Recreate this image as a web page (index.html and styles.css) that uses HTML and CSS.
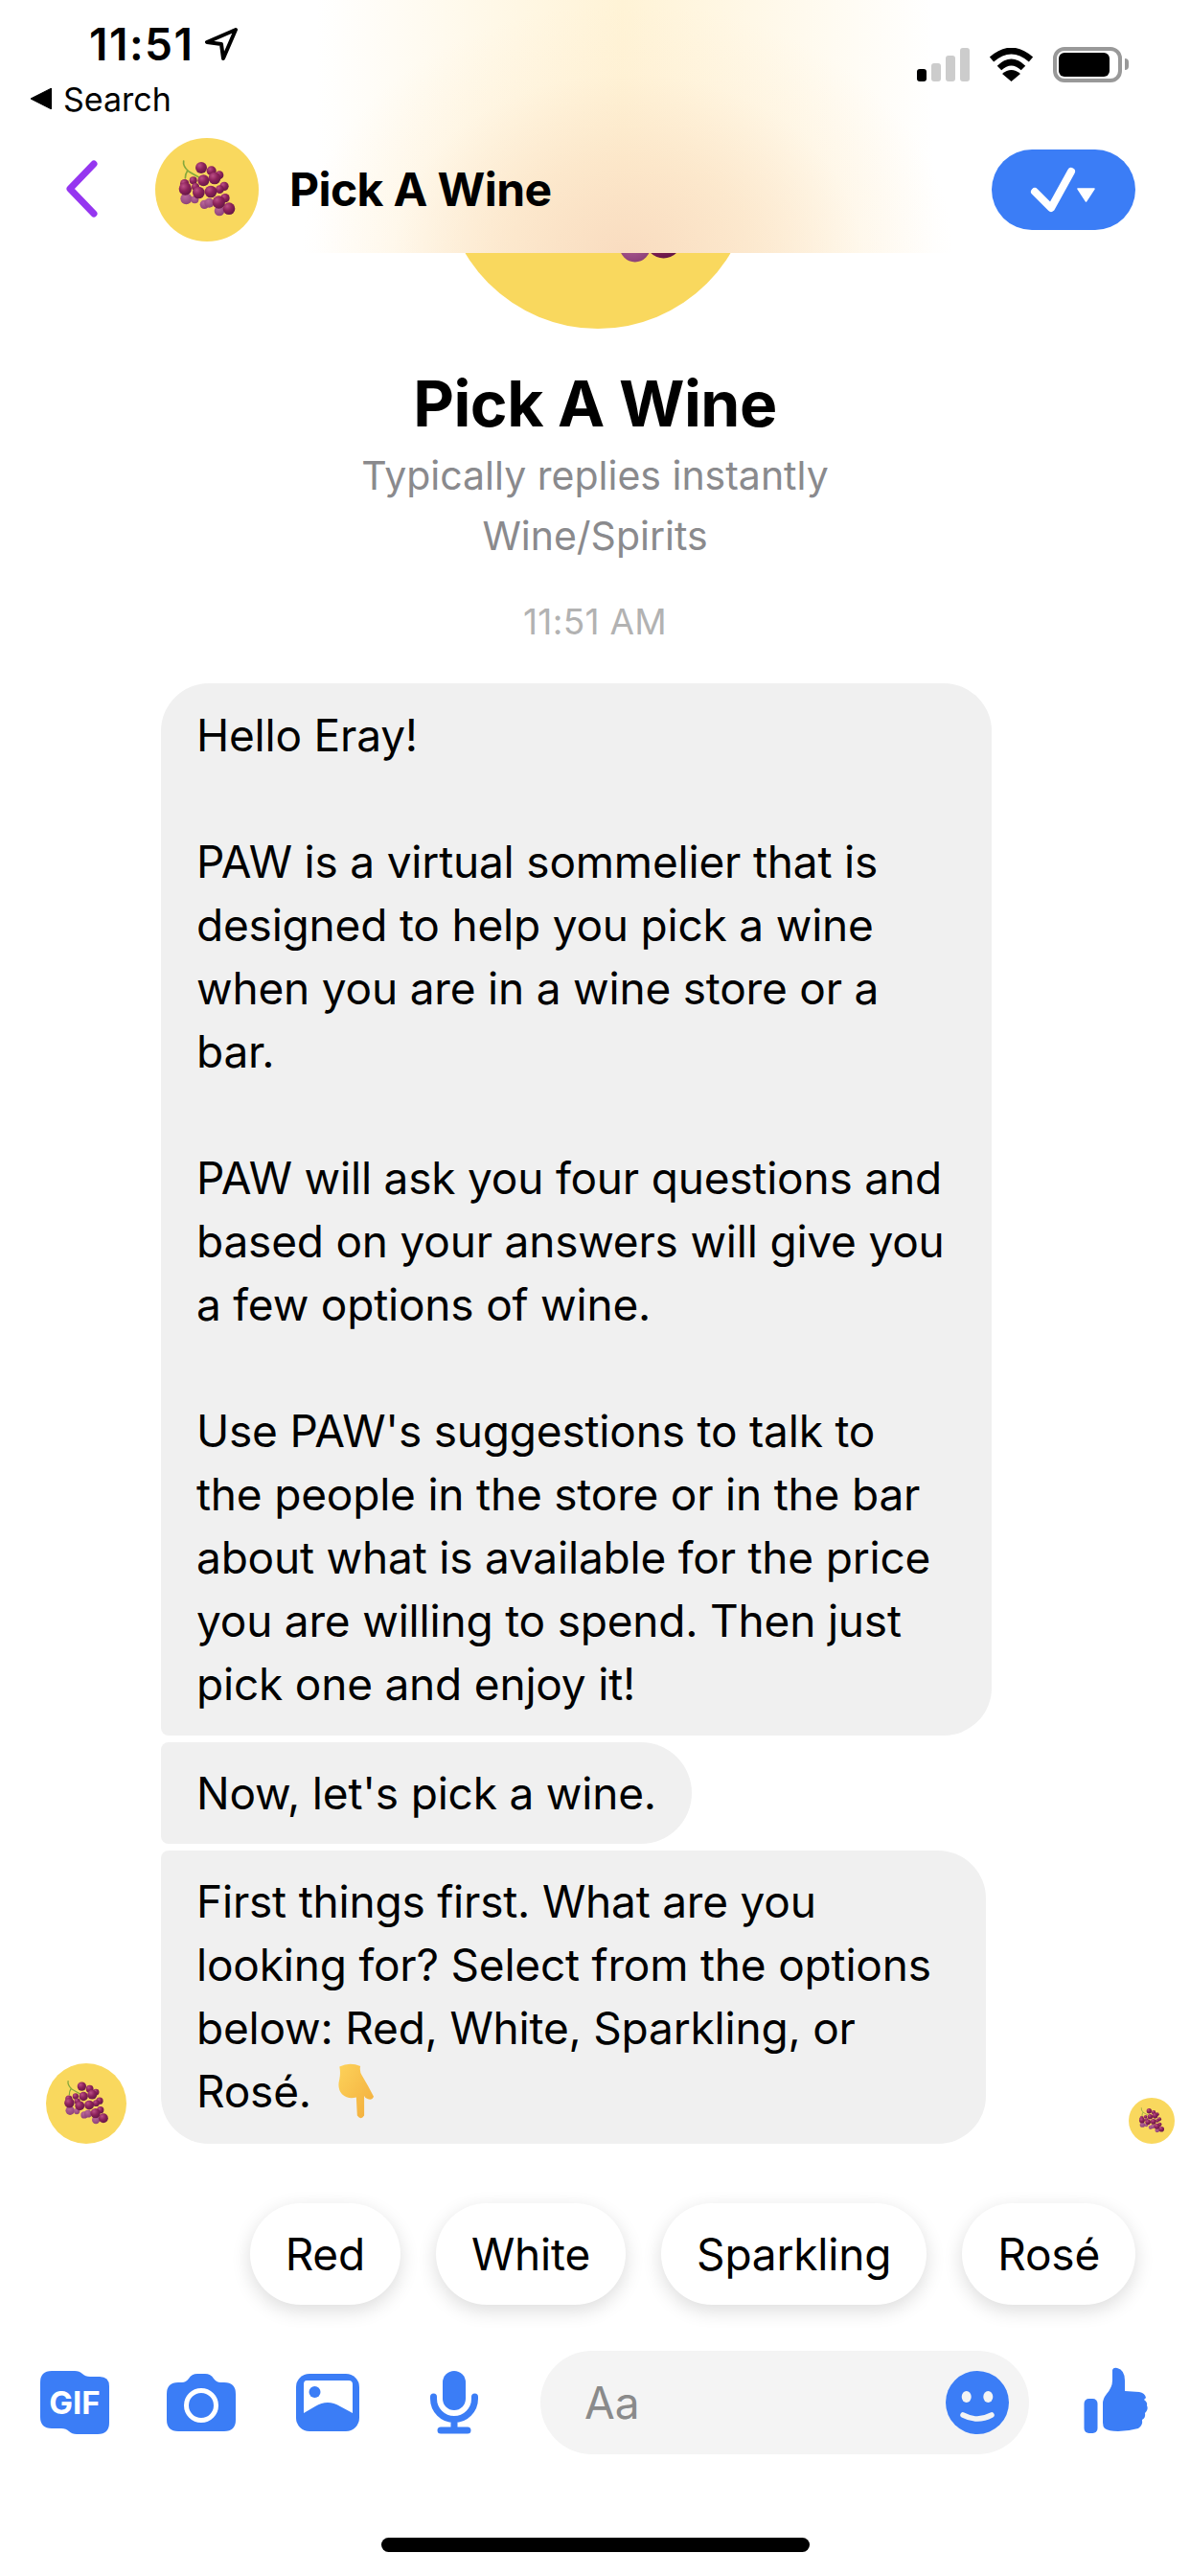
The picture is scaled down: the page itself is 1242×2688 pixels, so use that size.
FILE: index.html
```html
<html>
  <head>
    <link rel="stylesheet" href="styles.css">
  </head>
  <body>
    <svg class="defs">
      <defs>
        <radialGradient id="berry" cx="35%" cy="30%" r="75%">
          <stop offset="0" stop-color="#bb4f86"/>
          <stop offset="0.5" stop-color="#8c225a"/>
          <stop offset="1" stop-color="#641645"/>
        </radialGradient>
        <radialGradient id="berryFade" cx="40%" cy="30%" r="75%">
          <stop offset="0" stop-color="#b9669a"/>
          <stop offset="1" stop-color="#8b3f77"/>
        </radialGradient>
        <linearGradient id="skin" x1="0" y1="0" x2="1" y2="1">
          <stop offset="0" stop-color="#fdd25a"/>
          <stop offset="1" stop-color="#f2ad3c"/>
        </linearGradient>
      </defs>
      <symbol id="grapes" viewBox="66 42 324 324">
        <path d="M155 114Q152 130 170 146Q185 155 203 165M166 146Q160 155 160 168" fill="none" stroke="#86a83c" stroke-width="5" stroke-linecap="round"/>
        <g fill="url(#berryFade)">
          <circle cx="163" cy="232" r="18"/>
          <circle cx="190" cy="235" r="12"/>
          <circle cx="220" cy="250" r="14"/>
          <circle cx="235" cy="245" r="15"/>
          <circle cx="267" cy="270" r="16"/>
        </g>
        <g fill="url(#berry)">
          <circle cx="267" cy="158" r="13"/>
          <circle cx="242" cy="145" r="15"/>
          <circle cx="282" cy="193" r="14"/>
          <circle cx="185" cy="175" r="12"/>
          <circle cx="158" cy="185" r="14"/>
          <circle cx="210" cy="135" r="18"/>
          <circle cx="192" cy="195" r="12"/>
          <circle cx="252" cy="168" r="19"/>
          <circle cx="217" cy="175" r="18"/>
          <circle cx="268" cy="203" r="13"/>
          <circle cx="160" cy="201" r="20"/>
          <circle cx="202" cy="213" r="19"/>
          <circle cx="240" cy="210" r="19"/>
          <circle cx="285" cy="230" r="14"/>
          <circle cx="297" cy="263" r="19"/>
          <circle cx="265" cy="243" r="20"/>
        </g>
      </symbol>
    </svg>

    <div class="screen">
      <header class="topbar">
        <div class="status">
          <div class="status-left">
            <div class="clock">
              <span>11:51</span>
              <svg class="loc-arrow" viewBox="0 0 34 34"><path d="M32 2L2 15L17 17L19 32Z" fill="none" stroke="#000" stroke-width="4" stroke-linejoin="round"/></svg>
            </div>
            <div class="back-app">
              <svg class="back-tri" viewBox="0 0 20 20"><path d="M20 0L0 10L20 20Z" fill="#000" stroke="#000" stroke-width="1" stroke-linejoin="round"/></svg>
              <span>Search</span>
            </div>
          </div>
          <div class="status-right">
            <svg class="signal" viewBox="0 0 55 35">
              <rect x="0" y="22" width="10" height="13" rx="3" fill="#000"/>
              <rect x="15" y="16" width="10" height="19" rx="3" fill="#ccc"/>
              <rect x="30" y="8" width="10" height="27" rx="3" fill="#ccc"/>
              <rect x="45" y="0" width="10" height="35" rx="3" fill="#ccc"/>
            </svg>
            <svg class="wifi" viewBox="0 0 47 35">
              <path d="M3 12Q23.500 -6 44 12M11 21Q23.500 9 36 21" fill="none" stroke="#000" stroke-width="6.500"/>
              <path d="M23.500 35L14 27Q23.500 19 33 27Z" fill="#000"/>
            </svg>
            <div class="battery"><div class="battery-level"></div></div>
            <div class="battery-nub"></div>
          </div>
        </div>
        <nav class="nav">
          <svg class="chevron" viewBox="0 0 36 60"><path d="M31 4L6 30L31 56" fill="none" stroke="#9536f0" stroke-width="7" stroke-linecap="round" stroke-linejoin="round"/></svg>
          <div class="avatar avatar-nav"><svg class="grape-art"><use href="#grapes"/></svg></div>
          <div class="nav-title">Pick A Wine</div>
          <button class="status-btn">
            <svg viewBox="0 0 150 84"><path d="M45 44L62 61L83 23" fill="none" stroke="#fff" stroke-width="8" stroke-linecap="round" stroke-linejoin="round"/><path d="M90 41H107L98.500 54Z" fill="#fff" stroke="#fff" stroke-width="1.500" stroke-linejoin="round"/></svg>
          </button>
        </nav>
      </header>

      <section class="profile">
        <div class="avatar avatar-big"><svg viewBox="66 32 324 324" class="grape-art"><use href="#grapes" x="66" y="42" width="324" height="324"/></svg></div>
        <h1 class="profile-name">Pick A Wine</h1>
        <p class="profile-sub">Typically replies instantly</p>
        <p class="profile-sub">Wine/Spirits</p>
        <p class="timestamp">11:51 AM</p>
      </section>

      <section class="thread">
        <div class="row">
          <div class="bubble bubble-first">Hello Eray!<br><br>PAW is a virtual sommelier that is<br>designed to help you pick a wine<br>when you are in a wine store or a<br>bar.<br><br>PAW will ask you four questions and<br>based on your answers will give you<br>a few options of wine.<br><br>Use PAW's suggestions to talk to<br>the people in the store or in the bar<br>about what is available for the price<br>you are willing to spend. Then just<br>pick one and enjoy it!</div>
        </div>
        <div class="row">
          <div class="bubble bubble-mid">Now, let's pick a wine.</div>
        </div>
        <div class="row row-last">
          <div class="avatar avatar-small"><svg class="grape-art"><use href="#grapes"/></svg></div>
          <div class="bubble bubble-last">First things first. What are you<br>looking for? Select from the options<br>below: Red, White, Sparkling, or<br>Rosé.
            <svg class="point-down" viewBox="105 72 118 178"><path d="M112 85Q145 70 178 84Q174 100 184 115Q205 150 220 180Q214 196 194 184L190 178L190 240Q180 256 168 240L165 182Q140 190 120 172Q104 155 112 125Q116 105 112 85Z" fill="url(#skin)"/></svg>
          </div>
          <div class="avatar avatar-seen"><svg class="grape-art"><use href="#grapes"/></svg></div>
        </div>
      </section>

      <div class="replies">
        <div class="reply">Red</div>
        <div class="reply">White</div>
        <div class="reply">Sparkling</div>
        <div class="reply">Rosé</div>
      </div>

      <footer class="composer">
        <svg class="ic ic-gif" viewBox="0 0 72 66">
          <path d="M12 0H36Q41 0 44 3Q47 6 52 6H62Q72 6 72 16V54Q72 66 60 66H38Q33 66 30 63Q27 60 22 60H12Q0 60 0 48V12Q0 0 12 0Z"/>
          <text class="gif-label" x="36" y="45" text-anchor="middle">GIF</text>
        </svg>
        <svg class="ic ic-camera" viewBox="0 0 72 60">
          <path d="M12 9H16Q20 9 23 5Q26 0 32 0H40Q46 0 49 5Q52 9 56 9H60Q72 9 72 21V48Q72 60 60 60H12Q0 60 0 48V21Q0 9 12 9Z"/>
          <circle cx="36" cy="33" r="15.500" fill="none" stroke="#fff" stroke-width="5"/>
        </svg>
        <svg class="ic ic-image" viewBox="0 0 66 60">
          <rect width="66" height="60" rx="14"/>
          <path d="M11 7H55Q59 7 59 11V41L46 34Q33 26 20 34L8 41V11Q8 7 11 7Z" fill="#fff"/>
          <circle cx="19.500" cy="19" r="6"/>
        </svg>
        <svg class="ic ic-mic" viewBox="0 0 52 66">
          <rect x="14" y="0" width="24" height="41" rx="12"/>
          <path d="M4.500 27V29A21.500 21.500 0 0 0 47.500 29V27M26 51V61M12 62H40" fill="none" stroke="#3b7df6" stroke-width="7" stroke-linecap="round"/>
        </svg>
        <div class="input">
          <span class="placeholder">Aa</span>
          <svg class="ic ic-smile" viewBox="0 0 66 66">
            <circle cx="33" cy="33" r="33"/>
            <ellipse cx="21.700" cy="27" rx="5" ry="6" fill="#f4f4f4"/>
            <ellipse cx="44.300" cy="27" rx="5" ry="6" fill="#f4f4f4"/>
            <path d="M18 46Q33 54 48 46" fill="none" stroke="#f4f4f4" stroke-width="5.500" stroke-linecap="round"/>
          </svg>
        </div>
        <svg class="ic ic-thumb" viewBox="0 0 68 70">
          <rect x="0.500" y="33" width="14" height="36" rx="5"/>
          <path d="M30 3Q31 0 35 1Q43 3 43 14V25L58 26Q64 27 65 32L63 34Q67 37 66 40Q68 44 64 48Q65 53 61 55Q62 61 57 64Q46 67 36 67Q26 67 22 64Q20 62 20 58V38Q20 33 24 28Q30 21 30 14Z"/>
        </svg>
      </footer>

      <div class="home-bar"></div>
    </div>
  </body>
</html>
```

FILE: styles.css
```css
body {
  margin: 0;
  background: #fff;
  font-family: Inter, "Liberation Sans", sans-serif;
  color: #000;
}
p, h1 {
  margin: 0;
}
.defs {
  display: block;
  width: 0;
  height: 0;
}
.screen {
  width: 1242px;
  height: 2688px;
  overflow: hidden;
  display: flex;
  flex-direction: column;
}

/* header sits over the big avatar */
.topbar {
  position: relative;
  z-index: 1;
  height: 264px;
  flex-shrink: 0;
  background-color: #fff;
  background-image:
    radial-gradient(ellipse 340px 260px at 655px 264px, #f9dcc0 0, rgba(251, 226, 196, .7) 38%, rgba(254, 236, 208, .25) 72%, rgba(255, 240, 214, 0) 100%),
    linear-gradient(90deg, rgba(255, 247, 224, 0) 330px, #fff3d6 650px, rgba(255, 250, 235, 0) 975px);
}
.status {
  height: 144px;
  display: flex;
  justify-content: space-between;
}
.status-left {
  padding-top: 23px;
}
.clock {
  display: flex;
  align-items: center;
  height: 46px;
  padding-left: 93px;
  font-size: 46px;
  font-weight: 600;
  letter-spacing: 1.5px;
}
.loc-arrow {
  width: 34px;
  height: 34px;
  margin-left: 12px;
}
.back-app {
  display: flex;
  align-items: center;
  height: 40px;
  margin-top: 14px;
  padding-left: 32px;
  font-size: 34px;
}
.back-tri {
  width: 22px;
  height: 22px;
  margin-right: 12px;
}
.status-right {
  display: flex;
  align-items: flex-start;
  padding: 49px 64px 0 0;
}
.signal {
  width: 55px;
  height: 35px;
  margin-top: 1px;
}
.wifi {
  width: 47px;
  height: 35px;
  margin: 1px 20px 0;
}
.battery {
  box-sizing: border-box;
  width: 72px;
  height: 37px;
  padding: 2px;
  border: 4px solid #999;
  border-radius: 12px;
}
.battery-level {
  width: 53px;
  height: 25px;
  background: #000;
  border-radius: 6px;
}
.battery-nub {
  width: 4px;
  height: 12px;
  margin: 12px 0 0 3px;
  background: #999;
  border-radius: 0 4px 4px 0;
}
.nav {
  display: flex;
  align-items: flex-start;
}
.chevron {
  width: 36px;
  height: 60px;
  margin: 23px 0 0 67px;
}
.avatar {
  background: #f9d85e;
  border-radius: 50%;
  flex-shrink: 0;
  overflow: hidden;
}
.grape-art {
  display: block;
  width: 100%;
  height: 100%;
}
.avatar-nav {
  width: 108px;
  height: 108px;
  margin-left: 59px;
}
.nav-title {
  margin-left: 32px;
  font-size: 48px;
  font-weight: 700;
  letter-spacing: -.6px;
  line-height: 108px;
}
.status-btn {
  width: 150px;
  height: 84px;
  margin: 12px 57px 0 auto;
  padding: 0;
  border: 0;
  border-radius: 42px;
  background: #3b7df6;
}
.status-btn svg {
  display: block;
  width: 150px;
  height: 84px;
}

/* profile block */
.profile {
  text-align: center;
}
.avatar-big {
  width: 322px;
  height: 322px;
  margin: -243px 0 0 463px;
}
.profile-name {
  margin-top: 38px;
  font-size: 66px;
  font-weight: 700;
  letter-spacing: -.5px;
  line-height: 80px;
}
.profile-sub {
  font-size: 41px;
  line-height: 63px;
  color: #8a8a8d;
}
.profile-name + .profile-sub {
  margin-top: 4px;
}
.timestamp {
  margin-top: 38px;
  font-size: 37px;
  letter-spacing: .3px;
  line-height: 40px;
  color: #b2b2b2;
}

/* messages */
.thread {
  display: flex;
  flex-direction: column;
  gap: 7px;
  margin-top: 44px;
}
.row {
  display: flex;
  align-items: flex-end;
  padding-left: 168px;
}
.row-last {
  padding-left: 48px;
  padding-right: 16px;
}
.bubble {
  padding: 20px 37px;
  background: #f0f0f0;
  font-size: 46px;
  letter-spacing: -.2px;
  line-height: 66px;
}
.bubble-first {
  padding: 21px 49px 21px 37px;
  border-radius: 50px 50px 50px 8px;
}
.bubble-mid {
  border-radius: 8px 54px 54px 8px;
}
.bubble-last {
  margin-left: 36px;
  padding: 20px 57px 22px 37px;
  border-radius: 8px 50px 50px 50px;
}
.avatar-small {
  width: 84px;
  height: 84px;
}
.avatar-seen {
  width: 48px;
  height: 48px;
  margin-left: auto;
}
.point-down {
  width: 39px;
  height: 59px;
  margin-left: 14px;
  vertical-align: -12px;
}

/* quick replies */
.replies {
  display: flex;
  justify-content: flex-end;
  gap: 37px;
  margin-top: 62px;
  padding-right: 57px;
}
.reply {
  height: 106px;
  padding: 0 37px;
  border-radius: 53px;
  background: #fff;
  box-shadow: 0 6px 20px rgba(0, 0, 0, .14);
  font-size: 46px;
  letter-spacing: -.2px;
  line-height: 106px;
}

/* composer */
.composer {
  display: flex;
  align-items: center;
  height: 108px;
  margin-top: 48px;
  padding-left: 42px;
}
.ic {
  display: block;
  flex-shrink: 0;
  fill: #3b7df6;
}
.ic-gif {
  width: 72px;
  height: 66px;
}
.gif-label {
  fill: #fff;
  font-size: 33px;
  font-weight: 700;
}
.ic-camera {
  width: 72px;
  height: 60px;
  margin-left: 60px;
}
.ic-image {
  width: 66px;
  height: 60px;
  margin-left: 63px;
}
.ic-mic {
  width: 52px;
  height: 66px;
  margin-left: 73px;
}
.input {
  display: flex;
  align-items: center;
  justify-content: space-between;
  box-sizing: border-box;
  width: 510px;
  height: 108px;
  margin-left: 64px;
  padding: 0 21px 0 46px;
  border-radius: 54px;
  background: #f4f4f4;
}
.placeholder {
  font-size: 46px;
  color: #8a8a8a;
}
.ic-smile {
  width: 66px;
  height: 66px;
}
.ic-thumb {
  width: 68px;
  height: 70px;
  margin: -4px 0 0 57px;
}
.home-bar {
  width: 447px;
  height: 15px;
  margin: 87px auto 0;
  border-radius: 8px;
  background: #000;
}
```
